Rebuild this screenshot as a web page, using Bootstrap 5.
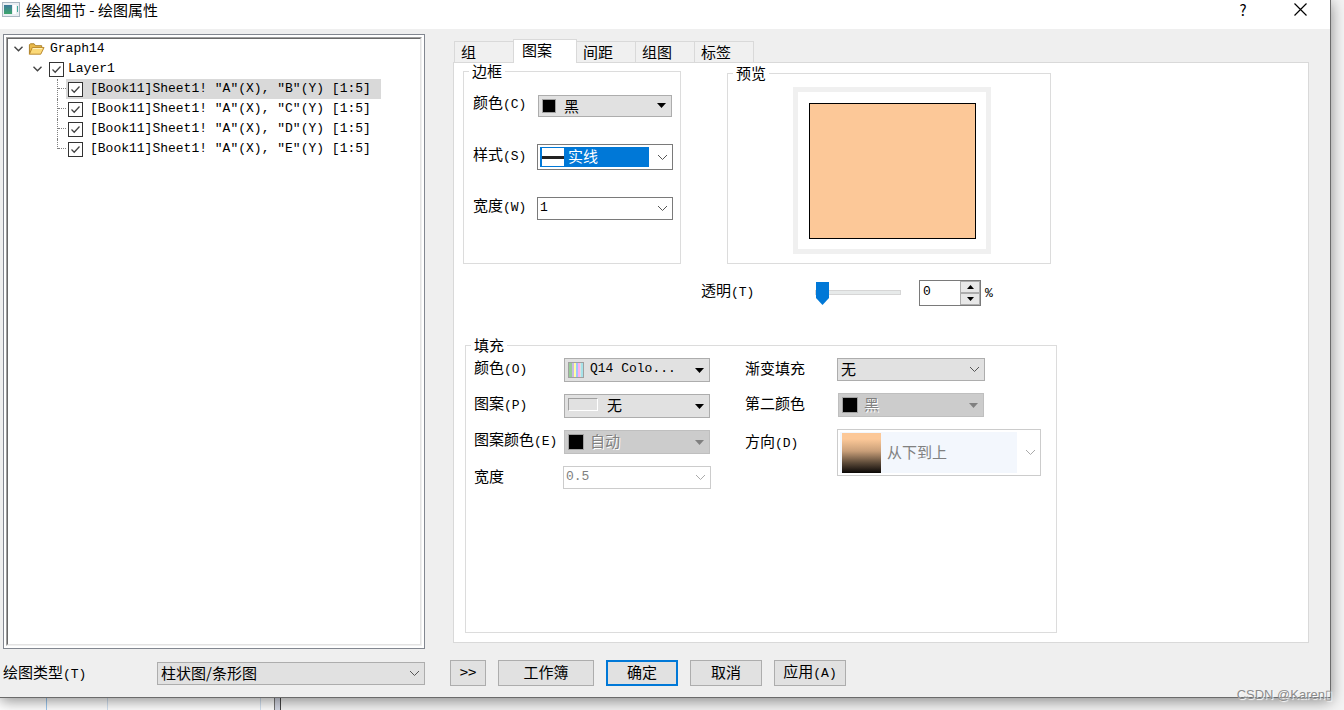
<!DOCTYPE html>
<html lang="zh-CN">
<head>
<meta charset="utf-8">
<meta name="viewport" content="width=device-width, initial-scale=1">
<title>绘图细节 - 绘图属性</title>
<link href="https://cdn.jsdelivr.net/npm/bootstrap@5.3.0/dist/css/bootstrap.min.css" rel="stylesheet">
<style>
  body { background: #f4f4f4; color: #000; font: 15px/20px "Noto Sans CJK SC", sans-serif; height: 100vh; overflow: hidden; }
  .dialog { background: #efefef; border-right: 1px solid #6b6b6b; border-bottom: 1px solid #6b6b6b; margin-right: 13px; box-shadow: 0 3px 14px rgba(0,0,0,.45); position: relative; z-index: 1; }
  .titlebar { height: 29px; background: #fff; padding: 0 22px 10px 2px; }
  .titlebar span { margin-left: 6px; word-break: keep-all; }
  .titlebar button { border: 0; background: none; padding: 0; width: 16px; line-height: 20px; color: #000; }
  .titlebar .close-key { margin-left: 41px; }
  .k { font: 13px/20px "Liberation Mono", monospace; }
  .left-side { width: 425px; padding: 5px 0 12px 3px; }
  .right-side { padding: 10px 21px 11px 0; margin-left: 25px; }

  /* object tree */
  .tree-frame { border: 1px solid #828790; background: #fff; padding: 2px; }
  .tree-well { border: 1px solid; border-color: #a0a0a0 #f0f0f0 #f0f0f0 #a0a0a0; }
  .tree { border: 1px solid; border-color: #696969 #e3e3e3 #e3e3e3 #696969; height: 100%; font: 13px/20px "Liberation Mono", monospace; }
  .tree ul { list-style: none; margin: 0; padding: 0; }
  .node { height: 20px; }
  .root-node { padding-left: 6px; gap: 5px; }
  .layer-node { padding-left: 25px; gap: 7px; }
  .twist { width: 9px; height: 6px; }
  .tick { appearance: none; width: 15px; height: 15px; margin: 0; border: 1px solid #333; background: #fff; flex: none; }
  .tick:checked { background: #fff url("data:image/svg+xml,%3Csvg xmlns='http://www.w3.org/2000/svg' viewBox='0 0 13 13'%3E%3Cpath d='M2.5 6.5l2.700 2.700L10.500 3.500' fill='none' stroke='%23444' stroke-width='1.300'/%3E%3C/svg%3E"); }
  .plots .node { padding-left: 49px; }
  .stem { width: 9px; height: 20px; border-left: 1px dotted #808080; position: relative; }
  .stem::after { content: ""; position: absolute; left: 0; right: 0; top: 9px; border-top: 1px dotted #808080; }
  .plots li:last-child .stem { height: 10px; align-self: flex-start; }
  .leaf { padding: 0 10px 0 2px; gap: 7px; height: 20px; white-space: pre; }
  .leaf.chosen { background: #d9d9d9; }
  .below-tree { margin-top: 13px; }

  /* tabs */
  .tabs { padding-left: 5px; height: 23px; }
  .tabs button { height: 21px; width: 60px; margin-left: -1px; padding: 0 6px 2px; border: 1px solid #d9d9d9; border-bottom: 0; background: #f0f0f0; text-align: left; line-height: 19px; color: #000; }
  .tabs button.current { height: 24px; width: 64px; padding: 0 8px 4px; background: #fff; margin-bottom: -1px; position: relative; z-index: 1; }
  .page { border: 1px solid #d9d9d9; background: #fff; margin-left: 3px; padding: 0 9px 9px; }

  /* group boxes */
  .group { border: 1px solid #dcdcdc; min-width: 0; }
  .group legend { float: none; width: auto; margin: 0 0 0 5px; padding: 0 3px; font-size: 15px; line-height: 16px; }
  .edge { width: 218px; }
  .edge-fields { display: grid; grid-template-columns: 64px 136px; gap: 27px 0; padding: 15px 7px 43px 9px; align-items: center; }
  .edge-fields label, .fill-fields label { padding-bottom: 4px; line-height: 16px; }
  .edge-fields .k, .fill-fields .k { line-height: 16px; }
  .fill-fields .top-label { align-self: start; padding-top: 4px; }
  .preview { width: 324px; margin: 2px 0 0 46px; }
  .canvas { width: 198px; border: 5px solid #f0f0f0; padding: 11px 10px 10px 11px; margin: 6px 0 0 65px; }
  .canvas div { height: 136px; border: 1px solid #000; background: #fcc898; }
  .fill { width: 592px; margin: 31px 0 0 2px; }
  .fill-fields { display: grid; align-content: start; align-items: center; gap: 12px 0; padding-top: 5px; }
  .fill-a { grid-template-columns: 89px 148px; margin-left: 8px; }
  .fill-b { grid-template-columns: 92px 204px; margin-left: 34px; }

  /* drop-downs */
  .pick { position: relative; display: flex; }
  .inset1 { margin: 0 1px; }
  .short { width: 148px; }
  .short-inset { width: 146px; }
  .drop { appearance: none; width: 100%; height: 23px; border: 1px solid #7a7a7a; border-radius: 0; padding: 0 20px 2px 3px; color: #000; font: 15px/20px "Noto Sans CJK SC", sans-serif; background: #fff no-repeat right 4px center / 11px 7px url("data:image/svg+xml,%3Csvg xmlns='http://www.w3.org/2000/svg' viewBox='0 0 11 7'%3E%3Cpath d='M1 1l4.500 4.500L10 1' fill='none' stroke='%23555'/%3E%3C/svg%3E"); }
  .drop.mono { font: 13px/20px "Liberation Mono", monospace; padding-left: 2px; }
  .drop.face { background-color: #e1e1e1; border-color: #adadad; }
  .drop.solid { height: 24px; padding-left: 25px; background-color: #e1e1e1; border-color: #adadad; background-image: url("data:image/svg+xml,%3Csvg xmlns='http://www.w3.org/2000/svg' viewBox='0 0 11 7'%3E%3Cpath d='M1 1h9L5.500 6z'/%3E%3C/svg%3E"); }
  .drop.slim { height: 22px; }
  .drop.indent { padding-left: 42px; }
  .drop.solid:disabled { background-color: #ccc; border-color: #bfbfbf; color: #808080; text-shadow: 1px 1px #fff; opacity: 1; background-image: url("data:image/svg+xml,%3Csvg xmlns='http://www.w3.org/2000/svg' viewBox='0 0 11 7'%3E%3Cpath d='M1 1h9L5.500 6z' fill='%23808080'/%3E%3C/svg%3E"); }
  .drop.pale:disabled { border-color: #ccc; color: #808080; opacity: 1; background-image: url("data:image/svg+xml,%3Csvg xmlns='http://www.w3.org/2000/svg' viewBox='0 0 11 7'%3E%3Cpath d='M1 1l4.500 4.500L10 1' fill='none' stroke='%23aaa'/%3E%3C/svg%3E"); }
  .drop.line { height: 26px; padding-left: 30px; padding-bottom: 3px; color: #fff; background-image: url("data:image/svg+xml,%3Csvg xmlns='http://www.w3.org/2000/svg' viewBox='0 0 11 7'%3E%3Cpath d='M1 1l4.500 4.500L10 1' fill='none' stroke='%23555'/%3E%3C/svg%3E"), linear-gradient(#0078d7, #0078d7); background-position: right 4px center, 2px 2px; background-size: 11px 7px, 109px 20px; }
  .drop.line option { color: #000; }
  .drop.way { height: 47px; padding-left: 49px; }
  .drop.way:disabled { background-image: url("data:image/svg+xml,%3Csvg xmlns='http://www.w3.org/2000/svg' viewBox='0 0 11 7'%3E%3Cpath d='M1 1l4.500 4.500L10 1' fill='none' stroke='%23aaa'/%3E%3C/svg%3E"), linear-gradient(#f3f7fd, #f3f7fd); background-position: right 4px center, 2px 2px; background-size: 11px 7px, 177px 41px; }
  .chip { position: absolute; left: 4px; top: 4px; width: 16px; height: 16px; background: #000; border: 1px solid #a0a0a0; pointer-events: none; }
  .chip.little { width: 14px; height: 14px; }
  .chip.bands { background: linear-gradient(90deg, #9c9 0 3px, #c9b8e6 3px 5px, #ffffa0 5px 7px, #a0c4ff 7px 9px, #ffb0e8 9px 11px, #e0e0e0 11px 12px, #a6e3e9 12px); }
  .chip.blank { width: 30px; height: 13px; background: #e1e1e1; border-color: #a0a0a0 #fff #fff #a0a0a0; }
  .chip.stroke { left: 5px; top: 4px; width: 22px; height: 18px; border: 0; background: linear-gradient(#fff 8px, #222 8px 11px, #fff 11px); }
  .chip.ramp { left: 5px; width: 39px; height: 40px; border: 0; background: linear-gradient(#fcc898 15%, #c99f79 45%, #5b4938 75%, #0a0706); }

  /* transparency */
  .alpha { margin: 16px 0 0 238px; height: 26px; }
  .alpha-label { width: 114px; line-height: 20px; }
  .slider { appearance: none; width: 86px; height: 23px; margin: 1px 18px 0 0; background: none; }
  .slider::-webkit-slider-runnable-track { height: 5px; background: #e7eaea; border: 1px solid #d6d6d6; }
  .slider::-webkit-slider-thumb { appearance: none; width: 13px; height: 23px; margin-top: -9px; background: #0078d7; clip-path: polygon(0 0, 100% 0, 100% 70%, 50% 100%, 0 70%); }
  .spin { width: 62px; height: 26px; border: 1px solid #7a7a7a; }
  .spin input { appearance: textfield; min-width: 0; width: 40px; border: 0; padding: 0 0 3px 3px; }
  .spin input::-webkit-inner-spin-button { display: none; }
  .spin-keys { width: 20px; background: #f0f0f0; }
  .spin-keys button { flex: 1; border: 1px solid #adadad; background: #e8e8e8; padding: 0; }
  .spin-keys svg { display: block; width: 7px; height: 4px; margin: auto; }

  /* footer buttons */
  .actions { margin-top: 17px; gap: 12px; }
  .push { height: 26px; width: 72px; padding: 0 0 2px; border: 1px solid #adadad; border-radius: 0; background: #e1e1e1; color: #000; font-size: 15px; line-height: 20px; }
  .push.more { width: 36px; }
  .push.wide { width: 96px; }
  .push.main { border: 2px solid #0078d7; }
  .type-label { width: 154px; }

  .behind { height: 12px; background: #f4f4f4; }
  .watermark { position: absolute; right: -2px; bottom: -8px; font: 13px/20px "Liberation Sans", sans-serif; color: #8c8c8c; text-shadow: 1px 1px 1px #fff; }
</style>
</head>
<body class="d-flex flex-column">
<main class="dialog flex-grow-1 d-flex flex-column">
  <header class="titlebar d-flex align-items-center">
    <svg width="18" height="15" viewBox="0 0 18 15" aria-hidden="true">
      <rect x=".5" y=".5" width="17" height="14" fill="#e9eef2" stroke="#aab7c2"/>
      <defs><linearGradient id="app" x2="0" y2="1"><stop stop-color="#3f7a9c"/><stop offset="1" stop-color="#3ca66b"/></linearGradient></defs>
      <rect x="2" y="3" width="8" height="9" fill="url(#app)"/><rect x="11" y="3" width="3" height="9" fill="#fff"/><rect x="15" y="4" width="1" height="6" fill="#4a9"/>
    </svg>
    <span>绘图细节 - 绘图属性</span>
    <button class="ms-auto" type="button" aria-label="帮助">?</button>
    <button class="close-key d-flex justify-content-center" type="button" aria-label="关闭"><svg width="13" height="13" viewBox="0 0 13 13"><path d="M.5.5l12 12M12.500.5l-12 12" stroke="#000" stroke-width="1.200"/></svg></button>
  </header>

  <div class="d-flex flex-grow-1">
    <section class="left-side d-flex flex-column flex-shrink-0">
      <div class="tree-frame flex-grow-1 d-flex"><div class="tree-well flex-grow-1"><div class="tree">
        <ul>
          <li>
            <div class="node root-node d-flex align-items-center">
              <svg class="twist" viewBox="0 0 9 6"><path d="M.5.8l4 4 4-4" fill="none" stroke="#444" stroke-width="1.400"/></svg>
              <svg width="17" height="14" viewBox="0 0 18 14" aria-hidden="true"><path d="M1.500 12.500v-10l1-1h4l1.500 2h6.500v2" fill="#e9b949" stroke="#a87c25"/><path d="M1.500 12.500l3-7h12.500l-3.500 7z" fill="#fbd978" stroke="#b8862b"/><path d="M5 6.500h10" stroke="#fff3c4"/></svg>
              <span>Graph14</span>
            </div>
            <ul>
              <li>
                <div class="node layer-node d-flex align-items-center">
                  <svg class="twist" viewBox="0 0 9 6"><path d="M.5.8l4 4 4-4" fill="none" stroke="#444" stroke-width="1.400"/></svg>
                  <label class="d-flex align-items-center gap-1"><input class="tick" type="checkbox" checked>Layer1</label>
                </div>
                <ul class="plots">
                  <li class="node d-flex align-items-center"><span class="stem"></span><label class="leaf chosen d-flex align-items-center"><input class="tick" type="checkbox" checked>[Book11]Sheet1! "A"(X), "B"(Y) [1:5]</label></li>
                  <li class="node d-flex align-items-center"><span class="stem"></span><label class="leaf d-flex align-items-center"><input class="tick" type="checkbox" checked>[Book11]Sheet1! "A"(X), "C"(Y) [1:5]</label></li>
                  <li class="node d-flex align-items-center"><span class="stem"></span><label class="leaf d-flex align-items-center"><input class="tick" type="checkbox" checked>[Book11]Sheet1! "A"(X), "D"(Y) [1:5]</label></li>
                  <li class="node d-flex align-items-center"><span class="stem"></span><label class="leaf d-flex align-items-center"><input class="tick" type="checkbox" checked>[Book11]Sheet1! "A"(X), "E"(Y) [1:5]</label></li>
                </ul>
              </li>
            </ul>
          </li>
        </ul>
      </div></div></div>
      <div class="below-tree d-flex align-items-center">
        <label class="type-label" for="plot-type">绘图类型<span class="k">(T)</span></label>
        <div class="pick flex-grow-1"><select class="drop face" id="plot-type"><option>柱状图/条形图</option></select></div>
      </div>
    </section>

    <section class="right-side flex-grow-1 d-flex flex-column">
      <nav class="tabs d-flex align-items-end" role="tablist">
        <button type="button" role="tab">组</button>
        <button type="button" role="tab" class="current" aria-selected="true">图案</button>
        <button type="button" role="tab">间距</button>
        <button type="button" role="tab">组图</button>
        <button type="button" role="tab">标签</button>
      </nav>
      <div class="page flex-grow-1 d-flex flex-column">
        <div class="d-flex">
          <fieldset class="group edge">
            <legend>边框</legend>
            <div class="edge-fields">
              <label for="edge-color">颜色<span class="k">(C)</span></label>
              <div class="pick inset1"><select class="drop solid slim" id="edge-color"><option>黑</option></select><span class="chip little"></span></div>
              <label for="edge-style">样式<span class="k">(S)</span></label>
              <div class="pick"><select class="drop line" id="edge-style"><option>实线</option></select><span class="chip stroke"></span></div>
              <label for="edge-width">宽度<span class="k">(W)</span></label>
              <div class="pick"><select class="drop mono" id="edge-width"><option>1</option></select></div>
            </div>
          </fieldset>
          <fieldset class="group preview">
            <legend>预览</legend>
            <div class="canvas"><div></div></div>
          </fieldset>
        </div>

        <div class="alpha d-flex">
          <label class="alpha-label" for="alpha">透明<span class="k">(T)</span></label>
          <input class="slider" type="range" id="alpha" min="0" max="100" value="0">
          <div class="spin d-flex">
            <input class="k" type="number" value="0" aria-label="透明">
            <div class="spin-keys d-flex flex-column">
              <button type="button" aria-label="增加"><svg viewBox="0 0 7 4"><path d="M0 4l3.500-4L7 4z"/></svg></button>
              <button type="button" aria-label="减少"><svg viewBox="0 0 7 4"><path d="M0 0l3.500 4L7 0z"/></svg></button>
            </div>
          </div>
          <span class="k ms-1 pt-1">%</span>
        </div>

        <fieldset class="group fill flex-grow-1">
          <legend>填充</legend>
          <div class="d-flex">
            <div class="fill-fields fill-a">
              <label for="fill-color">颜色<span class="k">(O)</span></label>
              <div class="pick inset1"><select class="drop mono solid" id="fill-color"><option>Q14 Colo...</option></select><span class="chip bands"></span></div>
              <label for="fill-pattern">图案<span class="k">(P)</span></label>
              <div class="pick inset1"><select class="drop solid indent" id="fill-pattern"><option>无</option></select><span class="chip blank"></span></div>
              <label for="pattern-color">图案颜色<span class="k">(E)</span></label>
              <div class="pick inset1"><select class="drop solid" id="pattern-color" disabled><option>自动</option></select><span class="chip"></span></div>
              <label for="pattern-width">宽度</label>
              <div class="pick"><select class="drop pale mono" id="pattern-width" disabled><option>0.5</option></select></div>
            </div>
            <div class="fill-fields fill-b">
              <label for="gradient">渐变填充</label>
              <div class="pick short"><select class="drop face" id="gradient"><option>无</option></select></div>
              <label for="second-color">第二颜色</label>
              <div class="pick inset1 short-inset"><select class="drop solid" id="second-color" disabled><option>黑</option></select><span class="chip"></span></div>
              <label class="top-label" for="direction">方向<span class="k">(D)</span></label>
              <div class="pick"><select class="drop pale way" id="direction" disabled><option>从下到上</option></select><span class="chip ramp"></span></div>
            </div>
          </div>
        </fieldset>
      </div>
      <div class="actions d-flex">
        <button class="push more" type="button">&gt;&gt;</button>
        <button class="push wide" type="button">工作簿</button>
        <button class="push main" type="button">确定</button>
        <button class="push" type="button">取消</button>
        <button class="push" type="button">应用<span class="k">(A)</span></button>
      </div>
    </section>
  </div>
  <span class="watermark">CSDN @Karen▯</span>
</main>
<div class="behind d-flex" aria-hidden="true">
  <svg width="282" height="12" viewBox="0 0 282 12"><rect width="274" height="12" fill="#fff"/><path d="M46.500 0v12" stroke="#9cc8f0"/><path d="M107.500 0v12M260.500 0v12" stroke="#d3e2f2"/><rect x="274" width="7" height="12" fill="#d5d9e6"/><path d="M274.500 0v12" stroke="#777"/><path d="M280.500 0v12" stroke="#444"/></svg>
</div>
<script src="https://cdn.jsdelivr.net/npm/bootstrap@5.3.0/dist/js/bootstrap.bundle.min.js"></script>
</body>
</html>
